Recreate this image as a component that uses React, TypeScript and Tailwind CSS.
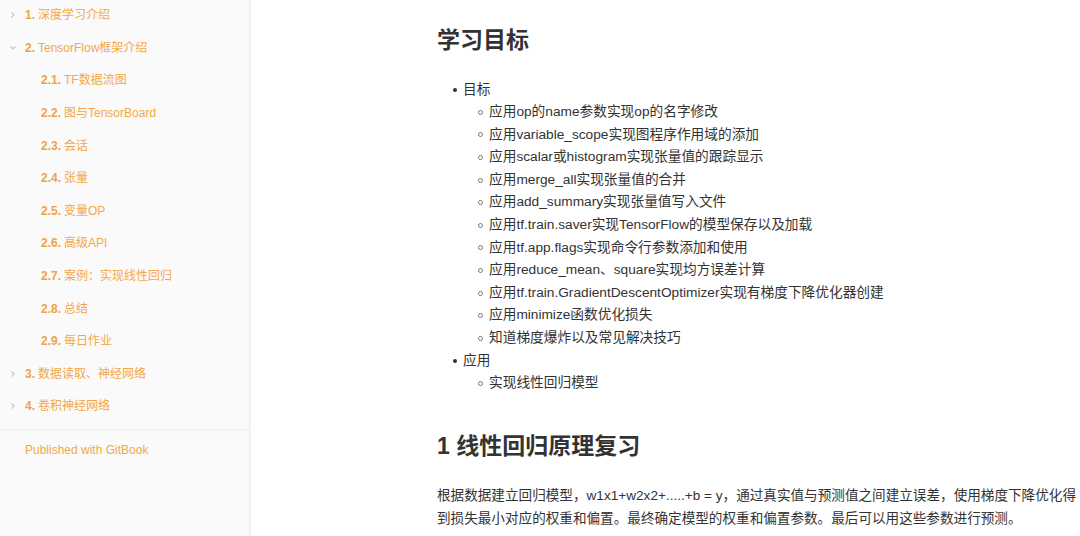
const font = "font-['Liberation_Sans','Noto_Sans_CJK_SC',sans-serif]";

type NavItem = { num: string; title: string; level: 1 | 2; open?: boolean };

const nav: NavItem[] = [
  { num: "1.", title: "深度学习介绍", level: 1 },
  { num: "2.", title: "TensorFlow框架介绍", level: 1, open: true },
  { num: "2.1.", title: "TF数据流图", level: 2 },
  { num: "2.2.", title: "图与TensorBoard", level: 2 },
  { num: "2.3.", title: "会话", level: 2 },
  { num: "2.4.", title: "张量", level: 2 },
  { num: "2.5.", title: "变量OP", level: 2 },
  { num: "2.6.", title: "高级API", level: 2 },
  { num: "2.7.", title: "案例：实现线性回归", level: 2 },
  { num: "2.8.", title: "总结", level: 2 },
  { num: "2.9.", title: "每日作业", level: 2 },
  { num: "3.", title: "数据读取、神经网络", level: 1 },
  { num: "4.", title: "卷积神经网络", level: 1 },
];

const goals = [
  "应用op的name参数实现op的名字修改",
  "应用variable_scope实现图程序作用域的添加",
  "应用scalar或histogram实现张量值的跟踪显示",
  "应用merge_all实现张量值的合并",
  "应用add_summary实现张量值写入文件",
  "应用tf.train.saver实现TensorFlow的模型保存以及加载",
  "应用tf.app.flags实现命令行参数添加和使用",
  "应用reduce_mean、square实现均方误差计算",
  "应用tf.train.GradientDescentOptimizer实现有梯度下降优化器创建",
  "应用minimize函数优化损失",
  "知道梯度爆炸以及常见解决技巧",
];

const Chevron = ({ open }: { open?: boolean }) => (
  <svg width="8" height="8" viewBox="0 0 8 8" className="absolute left-[9px] top-1/2 -translate-y-1/2">
    {open ? (
      <path d="M1.5 2.5 L4 5 L6.5 2.5" fill="none" stroke="#c8c8c8" strokeWidth="1.2" />
    ) : (
      <path d="M2.5 1.5 L5 4 L2.5 6.5" fill="none" stroke="#c8c8c8" strokeWidth="1.2" />
    )}
  </svg>
);

const Sidebar = () => (
  <aside className="w-[250px] shrink-0 h-full bg-[#fafafa] border-r border-[#ececec] shadow-[1px_0_3px_rgba(0,0,0,0.04)]">
    <ul className="-mt-[1px]">
      {nav.map((n) => (
        <li
          key={n.num}
          className={`relative h-[32.6px] flex items-center text-[12px] text-[#f3a846] ${n.level === 1 ? "pl-[25px]" : "pl-[41px]"}`}
        >
          {n.level === 1 && <Chevron open={n.open} />}
          <b className="font-bold text-[#eea445] mr-[3px]">{n.num}</b>
          <span>{n.title}</span>
        </li>
      ))}
    </ul>
    <div className="mt-[6px] border-t border-[#efefef]" />
    <div className="pl-[25px] pt-[11px] text-[12px] text-[#f3a846]">Published with GitBook</div>
  </aside>
);

const Disc = () => <span className="w-[4px] h-[4px] rounded-full bg-[#333] mr-[6px] ml-[16px]" />;
const Circle = () => <span className="w-[5px] h-[5px] rounded-full border border-[#777] mr-[6px] ml-[41px]" />;

export default function App() {
  return (
    <div className={`w-[1080px] h-[536px] overflow-hidden flex bg-white ${font}`}>
      <Sidebar />
      <main className="pl-[187px] pt-[25px] w-[830px] shrink-0 text-[#333]">
        <h1 className="text-[23px] leading-[30px] font-bold">学习目标</h1>
        <ul className="mt-[23.5px] text-[13.7px] leading-[22.6px]">
          <li className="flex items-center">
            <Disc />
            目标
          </li>
          {goals.map((g) => (
            <li key={g} className="flex items-center whitespace-nowrap">
              <Circle />
              {g}
            </li>
          ))}
          <li className="flex items-center">
            <Disc />
            应用
          </li>
          <li className="flex items-center">
            <Circle />
            实现线性回归模型
          </li>
        </ul>
        <h2 className="mt-[35.7px] text-[23px] leading-[30px] font-bold">1 线性回归原理复习</h2>
        <p className="mt-[23.5px] w-[645px] text-[13.6px] leading-[23px]">
          根据数据建立回归模型，w1x1+w2x2+.....+b = y，通过真实值与预测值之间建立误差，使用梯度下降优化得到损失最小对应的权重和偏置。最终确定模型的权重和偏置参数。最后可以用这些参数进行预测。
        </p>
      </main>
    </div>
  );
}
